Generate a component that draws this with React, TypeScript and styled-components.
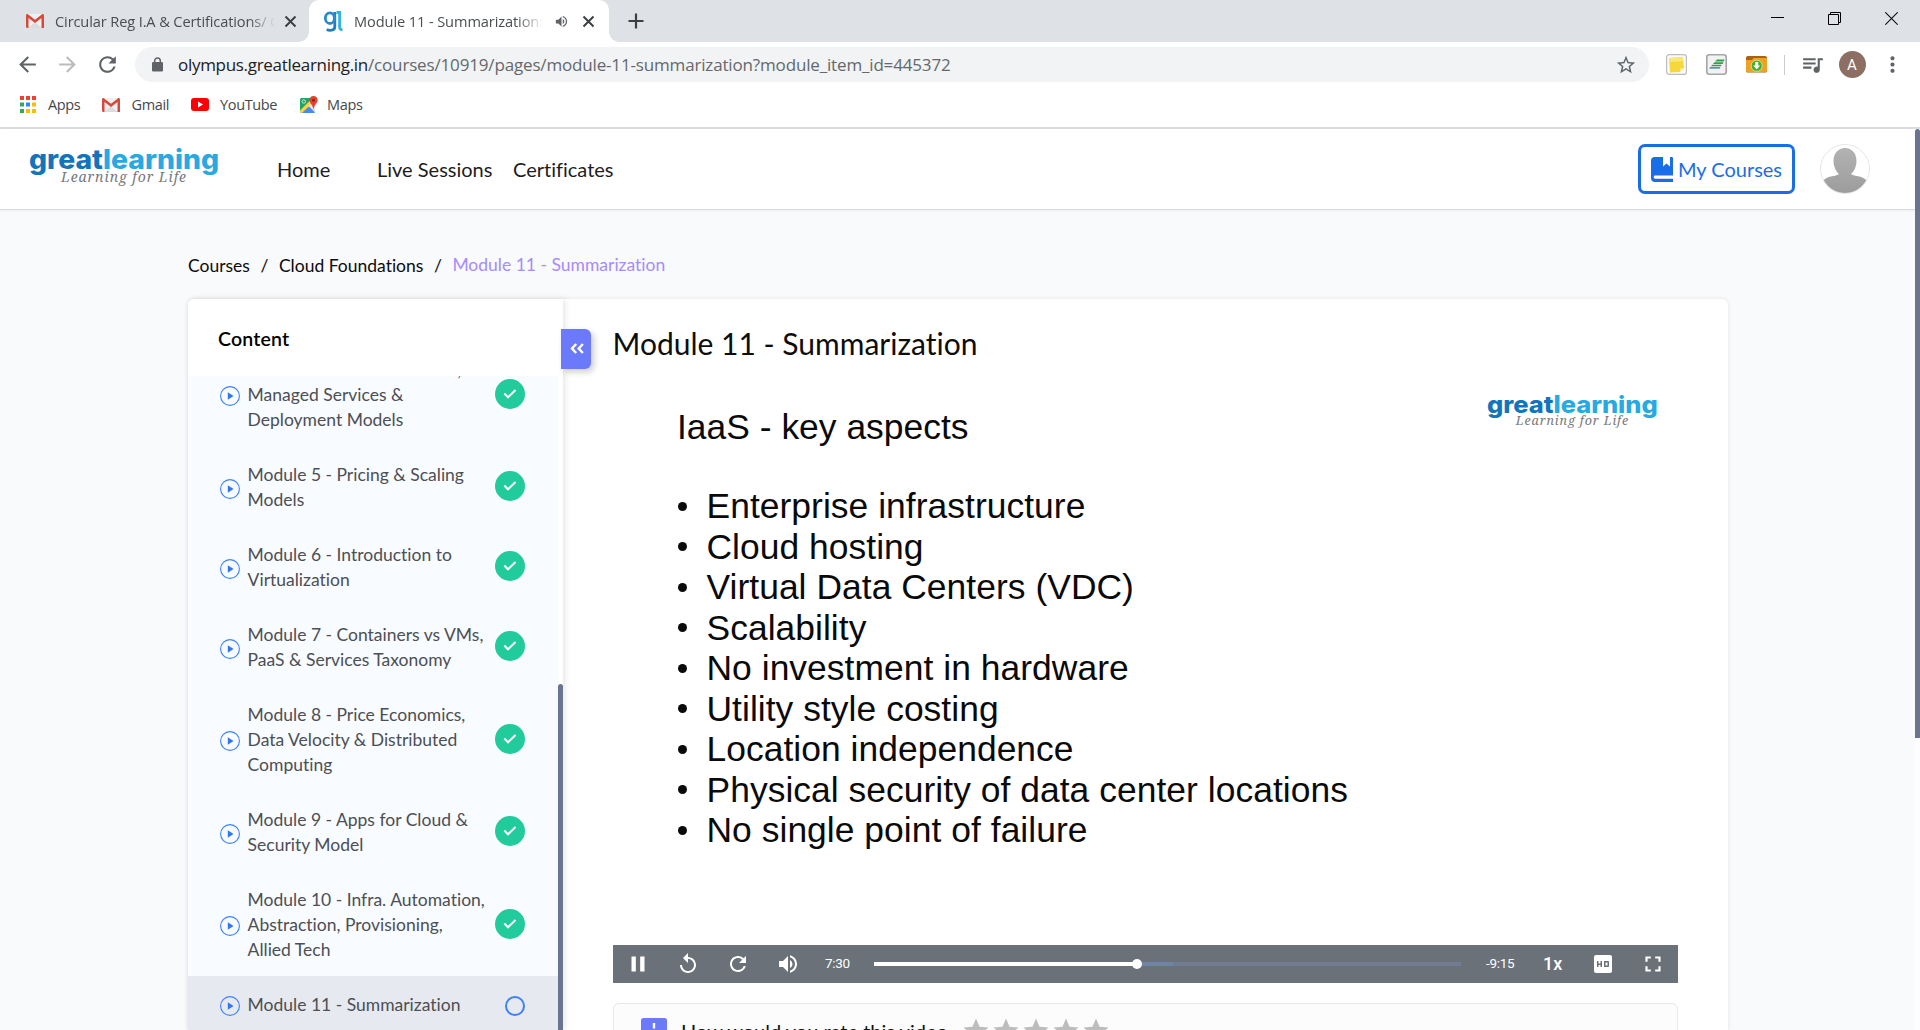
import React from 'react';
import styled, { createGlobalStyle, css } from 'styled-components';
import {
  MdArrowBack,
  MdArrowForward,
  MdFullscreen,
  MdHd,
  MdMoreVert,
  MdPause,
  MdQueueMusic,
  MdRefresh,
  MdReplay,
  MdStar,
  MdStarBorder,
  MdVolumeUp,
} from 'react-icons/md';

const GlobalStyle = createGlobalStyle`
  *, *::before, *::after { box-sizing: border-box; }
  body { margin: 0; background: #fff; overflow: hidden; }
  svg { display: block; flex: none; }
`;

const chromeFont = '"Open Sans", "Noto Sans", sans-serif';
const siteFont = 'Lato, "Open Sans", sans-serif';

const Window = styled.div`
  display: flex;
  flex-direction: column;
  width: 1920px;
  height: 1030px;
  overflow: hidden;
  background: #fff;
  font-family: ${siteFont};
`;

/* ---------- Browser chrome ---------- */

const TabStrip = styled.div`
  display: flex;
  align-items: stretch;
  height: 42px;
  background: #dee1e6;
  font: 14.6px ${chromeFont};
  color: #4a4e52;
`;

const Tab = styled.div<{ $active?: boolean; $width: number }>`
  position: relative;
  display: flex;
  align-items: center;
  width: ${(p) => p.$width}px;
  ${(p) =>
    p.$active &&
    css`
      background: #fff;
      border-radius: 10px 10px 0 0;
      &::before,
      &::after {
        content: '';
        position: absolute;
        bottom: 0;
        width: 10px;
        height: 10px;
      }
      &::before {
        left: -10px;
        background: radial-gradient(circle at 0 0, transparent 9.5px, #fff 10px);
      }
      &::after {
        right: -10px;
        background: radial-gradient(circle at 100% 0, transparent 9.5px, #fff 10px);
      }
    `}
`;

const TabIcon = styled.span<{ $left: number; $gap: number }>`
  display: flex;
  margin: 0 ${(p) => p.$gap}px 0 ${(p) => p.$left}px;
`;

const TabTitle = styled.span<{ $width: number; $spacing: number }>`
  width: ${(p) => p.$width}px;
  margin-top: -1px;
  overflow: hidden;
  white-space: nowrap;
  letter-spacing: ${(p) => p.$spacing}px;
  mask-image: linear-gradient(to right, #000 calc(100% - 26px), transparent);
`;

const TabClose = styled.span<{ $left: number }>`
  display: flex;
  margin-left: ${(p) => p.$left}px;
`;

const TabSound = styled.span`
  display: flex;
  margin-left: 11px;
  color: #5f6368;
`;

const NewTab = styled.span`
  display: flex;
  align-items: center;
  margin-left: 19px;
`;

const WindowControls = styled.div`
  display: flex;
  align-items: flex-start;
  gap: 44px;
  margin-left: auto;
  padding: 12px 22px 0 0;
`;

const Toolbar = styled.div`
  display: flex;
  align-items: center;
  height: 45px;
  padding-left: 8px;
  background: #fff;
`;

const ToolCell = styled.span<{ $faded?: boolean; $width?: number }>`
  display: flex;
  align-items: center;
  justify-content: center;
  width: ${(p) => p.$width ?? 40}px;
  color: ${(p) => (p.$faded ? '#babcbe' : '#5f6368')};
`;

const NavCell = styled(ToolCell)`
  position: relative;
  left: -0.5px;
`;

const Omnibox = styled.div`
  display: flex;
  align-items: center;
  width: 1514px;
  height: 35px;
  margin: 0 7px;
  padding: 0 12px 0 17px;
  border-radius: 18px;
  background: #f1f3f4;
  color: #5f6368;
`;

const Url = styled.span`
  flex: 1;
  margin-left: 15px;
  font: 17px ${chromeFont};
  letter-spacing: -0.16px;
  color: #64686c;
  white-space: nowrap;
`;

const Domain = styled.span`
  letter-spacing: -0.3px;
  color: #202124;
`;

const Divider = styled.span`
  width: 1px;
  height: 20px;
  background: #c9cbce;
`;

const ProfileBadge = styled.span`
  display: flex;
  align-items: center;
  justify-content: center;
  width: 27px;
  height: 27px;
  border-radius: 50%;
  background: #8d6e63;
  color: #fff;
  font: 15px Roboto, sans-serif;
`;

const BookmarkBar = styled.div`
  display: flex;
  height: 42px;
  padding: 0 0 5px 20px;
  border-bottom: 2px solid #dadce0;
  background: #fff;
`;

const Bookmark = styled.span<{ $width: number; $gap?: number }>`
  display: flex;
  align-items: center;
  gap: ${(p) => p.$gap ?? 12}px;
  width: ${(p) => p.$width}px;
  font: 14.5px ${chromeFont};
  letter-spacing: -0.35px;
  color: #44484c;
`;

/* ---------- Site ---------- */

const Page = styled.div`
  display: flex;
  flex: 1;
  min-height: 0;
  background: #f9fafb;
`;

const Site = styled.div`
  display: flex;
  flex-direction: column;
  width: 1915px;
`;

const ScrollRail = styled.div`
  width: 5px;
  background: #fdfdfd;
`;

const ScrollThumb = styled.div<{ $height: number | string; $top?: number }>`
  width: 5px;
  height: ${(p) => (typeof p.$height === 'number' ? `${p.$height}px` : p.$height)};
  margin-top: ${(p) => p.$top ?? 0}px;
  border-radius: 3px 3px 0 0;
  background: #69758c;
`;

const Header = styled.header`
  display: flex;
  align-items: center;
  flex: none;
  height: 81px;
  padding: 0 45px 1px 29px;
  border-bottom: 1px solid #dcdcde;
  box-shadow: 0 1px 2px rgba(0, 0, 0, 0.06);
  background: #fff;
`;

const Nav = styled.nav`
  display: flex;
  margin-left: 60px;
  font-size: 20px;
  font-variant-ligatures: none;
  color: #1d1d1d;
`;

const NavItem = styled.a<{ $width?: number }>`
  width: ${(p) => (p.$width ? `${p.$width}px` : 'auto')};
  white-space: nowrap;
`;

const CoursesButton = styled.button`
  display: flex;
  align-items: center;
  gap: 5px;
  width: 157px;
  height: 50px;
  margin: 0 25px 0 auto;
  padding: 0 0 0 10px;
  border: 3px solid #1a6de8;
  border-radius: 7px;
  background: #fff;
  color: #1a6de8;
  font: 20px ${siteFont};
  white-space: nowrap;
  svg { margin-top: 1px; }
  span { padding-top: 1px; }
`;

const Body = styled.main`
  display: flex;
  flex-direction: column;
  flex: 1;
  min-height: 0;
  padding: 43px 187px 0 188px;
`;

const Breadcrumb = styled.div`
  display: flex;
  align-items: center;
  flex: none;
  height: 25px;
  margin-bottom: 21px;
  font-size: 17.5px;
  font-variant-ligatures: none;
  color: #0c0c0c;
`;

const Slash = styled.span<{ $width: number }>`
  width: ${(p) => p.$width}px;
  text-align: center;
`;

const Current = styled.span`
  margin-top: -2px;
  color: #a78bfa;
`;

const Card = styled.div`
  display: flex;
  flex: 1;
  min-height: 0;
  border-radius: 6px 6px 0 0;
  background: #fff;
  box-shadow: 0 0 4px rgba(0, 0, 0, 0.1);
`;

const Sidebar = styled.aside`
  display: flex;
  flex-direction: column;
  position: relative;
  width: 375px;
  border-radius: 6px 0 0 0;
  background: #fff;
  box-shadow: 2px 0 6px rgba(0, 0, 0, 0.1);
`;

const SidebarTitle = styled.div`
  flex: none;
  height: 77px;
  padding: 28px 0 0 30px;
  font-size: 19.5px;
  line-height: 24px;
  font-weight: 600;
  letter-spacing: 0.2px;
  color: #000;
`;

const ListArea = styled.div`
  display: flex;
  flex: 1;
  min-height: 0;
`;

const ModuleList = styled.div`
  width: 370px;
  overflow: hidden;
  background: #f8fbff;
`;

const ModuleTrack = styled.div`
  margin-top: -35px;
`;

const ModuleRow = styled.div<{ $active?: boolean }>`
  display: flex;
  align-items: center;
  padding: 16px 33px 14px 32px;
  background: ${(p) => (p.$active ? '#e6e9ef' : 'transparent')};
`;

const ModuleName = styled.span`
  width: 241px;
  margin: 0 auto 0 7.6px;
  font-size: 17.5px;
  font-variant-ligatures: none;
  line-height: 25px;
  color: #4c4f53;
`;

const PlayMark = styled.span`
  display: flex;
  margin-top: 3px;
`;

const DoneMark = styled.span`
  display: flex;
  align-items: center;
  justify-content: center;
  width: 30px;
  height: 30px;
  margin: -4px 0 -2px;
  border-radius: 50%;
  background: #22cb9c;
`;

const OpenMark = styled.span`
  width: 20px;
  height: 20px;
  margin-top: 3px;
  border: 2px solid #3b82f6;
  border-radius: 50%;
`;

const CollapseButton = styled.button`
  position: absolute;
  top: 30px;
  left: 373px;
  display: flex;
  align-items: center;
  justify-content: center;
  width: 30px;
  height: 40px;
  padding: 0 0 1px 1px;
  border: 0;
  border-radius: 0 6px 6px 0;
  background: #6b79fb;
  box-shadow: 3px 3px 6px rgba(0, 0, 0, 0.2);
`;

const Lesson = styled.section`
  display: flex;
  flex-direction: column;
  flex: 1;
  padding: 22px 50px 0;
`;

const LessonTitle = styled.h1`
  flex: none;
  margin: 0 0 0 -0.5px;
  font-size: 30px;
  line-height: 44px;
  font-weight: 400;
  font-variant-ligatures: none;
  color: #0d0d0d;
`;

const Slide = styled.div`
  flex: none;
  display: flex;
  flex-direction: column;
  height: 580px;
  padding: 30px 22px 0 64px;
  font-family: "Liberation Sans", Arial, sans-serif;
  font-size: 35.4px;
  color: #0a0a0a;
`;

const SlideTop = styled.div`
  display: flex;
  justify-content: space-between;
  align-items: flex-start;
  height: 91px;
`;

const SlideTitle = styled.div`
  margin-top: 12px;
  line-height: 41px;
  letter-spacing: 0.02px;
`;

const Points = styled.ul`
  margin: 0;
  padding: 0;
  list-style: none;
`;

const Point = styled.li`
  display: flex;
  align-items: center;
  gap: 19.5px;
  height: 40.5px;
  line-height: 40.5px;
  letter-spacing: 0.05px;
  white-space: nowrap;
  &::before {
    content: '';
    width: 9px;
    height: 9px;
    margin: 0 0 0 1px;
    border-radius: 50%;
    background: #0a0a0a;
  }
`;

const Player = styled.div`
  display: flex;
  align-items: center;
  flex: none;
  height: 38px;
  padding-left: 5px;
  background: #6a7179;
  color: #fff;
  font: 13.5px Roboto, sans-serif;
`;

const PlayerCell = styled.span<{ $width: number }>`
  display: flex;
  align-items: center;
  justify-content: center;
  width: ${(p) => p.$width}px;
`;

const PlayerTime = styled.span<{ $left: number; $width: number }>`
  width: ${(p) => p.$width}px;
  margin: -3px 0 0 ${(p) => p.$left}px;
  letter-spacing: -0.3px;
  white-space: nowrap;
`;

const Seek = styled.div`
  display: flex;
  align-items: center;
  width: 587px;
  height: 10px;
`;

const SeekPart = styled.span<{ $width: number; $color: string }>`
  width: ${(p) => p.$width}px;
  height: 4px;
  background: ${(p) => p.$color};
`;

const SeekThumb = styled.span`
  width: 10px;
  height: 10px;
  margin: 0 -5px;
  z-index: 1;
  border-radius: 50%;
  background: #fff;
`;

const Speed = styled.span`
  width: 22px;
  margin: -1px 0 0 27px;
  font-size: 18px;
  font-weight: 500;
`;

const Rating = styled.div`
  display: flex;
  align-items: flex-start;
  flex: none;
  height: 62px;
  margin-top: 20px;
  padding: 14px 0 0 27px;
  border: 1px solid #e8e8e8;
  border-radius: 6px;
  background: #fcfcfc;
`;

const Question = styled.span`
  width: 279px;
  margin: 1px 0 0 14px;
  font-size: 20px;
  font-variant-ligatures: none;
  line-height: 24px;
  color: #111;
  white-space: nowrap;
`;

const Stars = styled.span`
  display: flex;
  margin: -2px 0 0 1px;
  color: #bdbdbd;
`;

/* ---------- Drawings ---------- */

const BrandLogo = ({ width, id }: { width: number; id: string }) => (
  <svg width={width} height={(width * 40) / 188} viewBox="0 0 188 40" style={{ overflow: 'visible' }} aria-label={id}>
    <text x="0" y="20" textLength="190" lengthAdjust="spacingAndGlyphs" fontFamily="Inter, sans-serif" fontWeight="800" fontSize="26.500">
      <tspan fill="#1474bb">great</tspan>
      <tspan fill="#29a9e1">learning</tspan>
    </text>
    <text x="32" y="33" textLength="125" fontFamily='"Noto Serif", "Liberation Serif", serif' fontStyle="italic" fontSize="14" fill="#77787b">
      Learning for Life
    </text>
  </svg>
);

const CloseIcon = () => (
  <svg width="17" height="17" viewBox="0 0 17 17" stroke="#3c4043" strokeWidth="2">
    <path d="m3.500 3.500 10 10M13.500 3.500l-10 10" />
  </svg>
);

const GmailIcon = ({ size = 18 }: { size?: number }) => (
  <svg width={size} height={(size * 14) / 18} viewBox="0 0 18 14">
    <rect x="0.5" width="17" height="14" rx="1.2" fill="#f0f0f0" />
    <path d="M2.5 14 9 8l6.500 6z" fill="#dcdcdc" />
    <path d="M0 1.500C0 .4 1.200-.3 2.200.4L9 5.700 15.800.4C16.800-.3 18 .4 18 1.500V14h-2.500V4L9 9 2.500 4V14H1.200C.5 14 0 13.500 0 12.800z" fill="#d64a3c" />
  </svg>
);

const GlIcon = () => (
  <svg width="20" height="21" viewBox="0 0 20 21" fill="none" strokeWidth="2.800">
    <path d="M10.800 1v14.500c0 2.800-1.800 3.800-4.300 3.800-1.600 0-2.800-.3-3.800-.8" stroke="#1f7fc0" />
    <ellipse cx="5.900" cy="7.200" rx="4.500" ry="5.300" stroke="#2a8acb" />
    <path d="M12.500 1.500h3.100V16c0 1.900.8 2.800 2.900 2.900" stroke="#35b1e4" />
  </svg>
);

const appColors = ['#ea4335', '#ea4335', '#ea4335', '#34a853', '#2a8af6', '#fbbc05', '#34a853', '#fbbc05', '#fbbc05'];

const AppsIcon = () => (
  <svg width="16" height="17" viewBox="0 0 16 17">
    {appColors.map((c, i) => (
      <rect key={i} x={(i % 3) * 6} y={Math.floor(i / 3) * 6.5} width="4" height="4" fill={c} />
    ))}
  </svg>
);

const YouTubeIcon = () => (
  <svg width="18" height="13" viewBox="0 0 18 13">
    <rect width="18" height="13" rx="3" fill="#f00" />
    <path d="M7 3.600v5.800l5-2.900z" fill="#fff" />
  </svg>
);

const MapsIcon = () => (
  <svg width="18" height="18" viewBox="0 0 18 18">
    <rect y="2" width="15" height="15" rx="1.500" fill="#1fa463" />
    <path d="M1 17 8 9.500 15 17z" fill="#4a89f3" />
    <path d="M0 14.500 11.500 3l2.500 3L2 17H1.500C.7 17 0 16.300 0 15.500z" fill="#fdd23b" />
    <path d="m8.500 10 6.500 6.500V8l-3-1.500z" fill="#e3e3e3" />
    <path d="M2.500 17 8 11.500l5.500 5.500z" fill="#4a89f3" />
    <path d="M13.500 0C11 0 9.300 1.800 9.300 4.100c0 3 3.500 4.300 4.200 9.400.7-5.100 4.200-6.400 4.200-9.400C17.700 1.800 16 0 13.500 0z" fill="#e5432f" />
    <circle cx="13.500" cy="4.200" r="1.500" fill="#8c2318" />
    <circle cx="3.800" cy="5.500" r="1.700" fill="none" stroke="#d6f2e2" strokeWidth="0.900" />
  </svg>
);

const NoteExtension = () => (
  <svg width="21" height="21" viewBox="0 0 21 21">
    <rect x="0.600" y="0.600" width="19.800" height="19.800" rx="2.500" fill="#fafafa" stroke="#bdbdbd" strokeWidth="1.200" />
    <path d="m3 4 14-1 1 11-4 4-10 .5z" fill="#f6d83c" />
    <path d="m3 4 14-1 .3 4L3.300 8z" fill="#fbe777" />
    <path d="m18 14-4 4 .3-3.500z" fill="#fff2a0" />
  </svg>
);

const StripeExtension = () => (
  <svg width="21" height="21" viewBox="0 0 21 21">
    <rect x="0.800" y="0.800" width="19.400" height="19.400" rx="2.500" fill="#f2f2f2" stroke="#a3a5a7" strokeWidth="1.600" />
    <path d="M11 5.500h7.500l-.8 1.900H9zM8.500 8.200h9l-.8 1.700H7zM6.300 10.700h9.500l-1 1.600H5z" fill="#2ba24b" />
    <path d="M4.200 13.200h10.300l-.8 1.400H3z" fill="#1f6fb0" />
  </svg>
);

const FolderExtension = () => (
  <svg width="21" height="17" viewBox="0 0 21 17">
    <path d="M0 2C0 .8.8 0 2 0h17c1.200 0 2 .8 2 2v13c0 1.200-.8 1.500-2 1.500H2c-1.200 0-2-.3-2-1.500z" fill="#a96310" />
    <path d="M0 4h6l1.500-2H21v12.500c0 1.200-.8 1.500-2 1.500H2c-1.200 0-2-.3-2-1.500z" fill="#f0a11f" />
    <circle cx="10.700" cy="9.800" r="5.600" fill="#46b02c" stroke="#d8efb9" strokeWidth="0.800" />
    <path d="M9.200 6h3v3.500h2l-3.500 4-3.500-4h2z" fill="#fff" />
  </svg>
);

/* Closed book with a notched ribbon hanging from its top edge. */
const BookIcon = () => (
  <svg width="22" height="25" viewBox="0 0 22 25">
    <path d="M3.500 0H12v9.500l3.500-3 3.500 3V0h1.800c.7 0 1.200.5 1.200 1.200V18.500H4.200c-1 0-1.500.6-1.500 1.600s.5 1.600 1.500 1.600H22V25H4C1.600 25 0 23.400 0 21V3.500C0 1.500 1.500 0 3.500 0z" fill="#1a6de8" />
  </svg>
);

const Avatar = () => (
  <svg width="50" height="50" viewBox="0 0 50 50">
    <defs>
      <linearGradient id="person" x1="0" y1="0" x2="0" y2="1">
        <stop offset="0" stopColor="#b3b3b3" />
        <stop offset="1" stopColor="#9c9c9c" />
      </linearGradient>
      <clipPath id="round"><circle cx="25" cy="25" r="24" /></clipPath>
    </defs>
    <circle cx="25" cy="25" r="24.500" fill="#fff" stroke="#e6e6e6" />
    <g clipPath="url(#round)" fill="url(#person)">
      <path d="M25 4c7 0 11.500 5.500 11.500 13 0 5.500-2.500 10.500-5.500 13 2 2 6 1.700 9.500 2.700C44 33.700 46 35.500 47 37v13H3V37c1-1.500 3-3.300 6.500-4.300 3.500-1 7.500-.7 9.500-2.700-3-2.500-5.500-7.500-5.500-13C13.500 9.500 18 4 25 4z" />
    </g>
  </svg>
);

const PlayIcon = () => (
  <svg width="20" height="20" viewBox="0 0 20 20">
    <circle cx="10" cy="10" r="9.400" fill="none" stroke="#3b82f6" strokeWidth="1.100" />
    <path d="M7.800 6.300v7.400L13.500 10z" fill="#2f77ee" />
  </svg>
);

const CheckIcon = () => (
  <svg width="14" height="10" viewBox="0 0 14 10" fill="none" stroke="#fff" strokeWidth="2">
    <path d="m1.300 4.500 3.700 3.800L12.500 1" />
  </svg>
);

const ChevronsIcon = () => (
  <svg width="14" height="11" viewBox="0 0 14 11" fill="none" stroke="#fff" strokeWidth="2.400">
    <path d="M6.200 1 2 5.500 6.200 10M12.900 1 8.700 5.500l4.200 4.500" />
  </svg>
);

const FeedbackIcon = () => (
  <svg width="26" height="26" viewBox="0 0 26 26">
    <path d="M2.500 0h21C25 0 26 1 26 2.500v15.800c0 1.500-1 2.600-2.500 2.600H5.200L0 26V2.500C0 1 1 0 2.500 0z" fill="#6b79fb" />
    <path d="M11.800 5h2.400v5.500h-2.400zM11.800 15h2.400v2.500h-2.400z" fill="#fff" />
  </svg>
);

/* ---------- Data ---------- */

const modules = [
  'Module 4 - Cloud Solutions, Managed Services & Deployment Models',
  'Module 5 - Pricing & Scaling Models',
  'Module 6 - Introduction to Virtualization',
  'Module 7 - Containers vs VMs, PaaS & Services Taxonomy',
  'Module 8 - Price Economics, Data Velocity & Distributed Computing',
  'Module 9 - Apps for Cloud & Security Model',
  'Module 10 - Infra. Automation, Abstraction, Provisioning, Allied Tech',
];

const points = [
  'Enterprise infrastructure',
  'Cloud hosting',
  'Virtual Data Centers (VDC)',
  'Scalability',
  'No investment in hardware',
  'Utility style costing',
  'Location independence',
  'Physical security of data center locations',
  'No single point of failure',
];

const BrowserChrome = () => (
  <>
    <TabStrip>
      <Tab $width={309}>
        <TabIcon $left={26} $gap={11}><GmailIcon /></TabIcon>
        <TabTitle $width={220} $spacing={-0.12}>Circular Reg I.A &amp; Certifications/ C</TabTitle>
        <TabClose $left={7}><CloseIcon /></TabClose>
      </Tab>
      <Tab $width={300} $active>
        <TabIcon $left={15} $gap={10}><GlIcon /></TabIcon>
        <TabTitle $width={189} $spacing={-0.1}>Module 11 - Summarization: C</TabTitle>
        <TabSound><MdVolumeUp size={15} /></TabSound>
        <TabClose $left={11}><CloseIcon /></TabClose>
      </Tab>
      <NewTab>
        <svg width="16" height="16" viewBox="0 0 16 16" stroke="#3c4043" strokeWidth="2.200">
          <path d="M8 .5v15M.5 8h15" />
        </svg>
      </NewTab>
      <WindowControls>
        <svg width="13" height="13" viewBox="0 0 13 13"><path d="M0 5.500h13" stroke="#000" /></svg>
        <svg width="13" height="13" viewBox="0 0 13 13" fill="none" stroke="#000">
          <path d="M.5 2.500h10v10H.5zM2.500 2.500v-2h10v10h-2" />
        </svg>
        <svg width="13" height="13" viewBox="0 0 13 13" stroke="#111" strokeWidth="1.100">
          <path d="m.3.300 12.400 12.400M12.700.300.3 12.700" />
        </svg>
      </WindowControls>
    </TabStrip>
    <Toolbar>
      <NavCell><MdArrowBack size={25} /></NavCell>
      <NavCell $faded><MdArrowForward size={25} /></NavCell>
      <NavCell><MdRefresh size={25} /></NavCell>
      <Omnibox>
        <svg width="11" height="16" viewBox="0 0 11 16" fill="#5f6368">
          <rect y="5" width="11" height="9.500" rx="1.300" />
          <path d="M2.700 6V3.800a2.800 2.800 0 0 1 5.600 0V6" fill="none" stroke="#5f6368" strokeWidth="1.500" />
        </svg>
        <Url><Domain>olympus.greatlearning.in</Domain>/courses/10919/pages/module-11-summarization?module_item_id=445372</Url>
        <MdStarBorder size={22} />
      </Omnibox>
      <ToolCell><NoteExtension /></ToolCell>
      <ToolCell><StripeExtension /></ToolCell>
      <ToolCell><FolderExtension /></ToolCell>
      <ToolCell $width={16}><Divider /></ToolCell>
      <ToolCell><MdQueueMusic size={25} /></ToolCell>
      <ToolCell><ProfileBadge>A</ProfileBadge></ToolCell>
      <ToolCell><MdMoreVert size={25} /></ToolCell>
    </Toolbar>
    <BookmarkBar>
      <Bookmark $width={81.5}><AppsIcon />Apps</Bookmark>
      <Bookmark $width={89.5}><GmailIcon />Gmail</Bookmark>
      <Bookmark $width={109} $gap={11}><YouTubeIcon />YouTube</Bookmark>
      <Bookmark $width={80} $gap={9}><MapsIcon />Maps</Bookmark>
    </BookmarkBar>
  </>
);

const SiteHeader = () => (
  <Header>
    <BrandLogo width={188} id="header brand" />
    <Nav>
      <NavItem $width={100}>Home</NavItem>
      <NavItem $width={136}>Live Sessions</NavItem>
      <NavItem>Certificates</NavItem>
    </Nav>
    <CoursesButton><BookIcon /><span>My Courses</span></CoursesButton>
    <Avatar />
  </Header>
);

const ContentSidebar = () => (
  <Sidebar>
    <SidebarTitle>Content</SidebarTitle>
    <ListArea>
      <ModuleList>
        <ModuleTrack>
          {modules.map((name) => (
            <ModuleRow key={name}>
              <PlayMark><PlayIcon /></PlayMark>
              <ModuleName>{name}</ModuleName>
              <DoneMark><CheckIcon /></DoneMark>
            </ModuleRow>
          ))}
          <ModuleRow $active>
            <PlayMark><PlayIcon /></PlayMark>
            <ModuleName>Module 11 - Summarization</ModuleName>
            <OpenMark />
          </ModuleRow>
        </ModuleTrack>
      </ModuleList>
      <ScrollThumb $height="auto" $top={308} />
    </ListArea>
    <CollapseButton aria-label="Collapse"><ChevronsIcon /></CollapseButton>
  </Sidebar>
);

const VideoPlayer = () => (
  <Player>
    <PlayerCell $width={40}><MdPause size={26} /></PlayerCell>
    <PlayerCell $width={60}><MdReplay size={24} /></PlayerCell>
    <PlayerCell $width={40}><MdRefresh size={24} /></PlayerCell>
    <PlayerCell $width={60}><MdVolumeUp size={24} /></PlayerCell>
    <PlayerTime $left={7} $width={49}>7:30</PlayerTime>
    <Seek>
      <SeekPart $width={263} $color="#fff" />
      <SeekThumb />
      <SeekPart $width={36} $color="#7085a3" />
      <SeekPart $width={288} $color="#717b91" />
    </Seek>
    <PlayerTime $left={25} $width={30}>-9:15</PlayerTime>
    <Speed>1x</Speed>
    <PlayerCell $width={76}><MdHd size={24} /></PlayerCell>
    <PlayerCell $width={23}><MdFullscreen size={26} /></PlayerCell>
  </Player>
);

export default function App() {
  return (
    <Window>
      <GlobalStyle />
      <BrowserChrome />
      <Page>
        <Site>
          <SiteHeader />
          <Body>
            <Breadcrumb>
              <span>Courses</span>
              <Slash $width={29}>/</Slash>
              <span>Cloud Foundations</span>
              <Slash $width={29}>/</Slash>
              <Current>Module 11 - Summarization</Current>
            </Breadcrumb>
            <Card>
              <ContentSidebar />
              <Lesson>
                <LessonTitle>Module 11 - Summarization</LessonTitle>
                <Slide>
                  <SlideTop>
                    <SlideTitle>IaaS - key aspects</SlideTitle>
                    <BrandLogo width={169} id="slide brand" />
                  </SlideTop>
                  <Points>
                    {points.map((text) => (
                      <Point key={text}>{text}</Point>
                    ))}
                  </Points>
                </Slide>
                <VideoPlayer />
                <Rating>
                  <FeedbackIcon />
                  <Question>How would you rate this video</Question>
                  <Stars>
                    {[1, 2, 3, 4, 5].map((n) => (
                      <MdStar key={n} size={30} />
                    ))}
                  </Stars>
                </Rating>
              </Lesson>
            </Card>
          </Body>
        </Site>
        <ScrollRail><ScrollThumb $height={609} /></ScrollRail>
      </Page>
    </Window>
  );
}
